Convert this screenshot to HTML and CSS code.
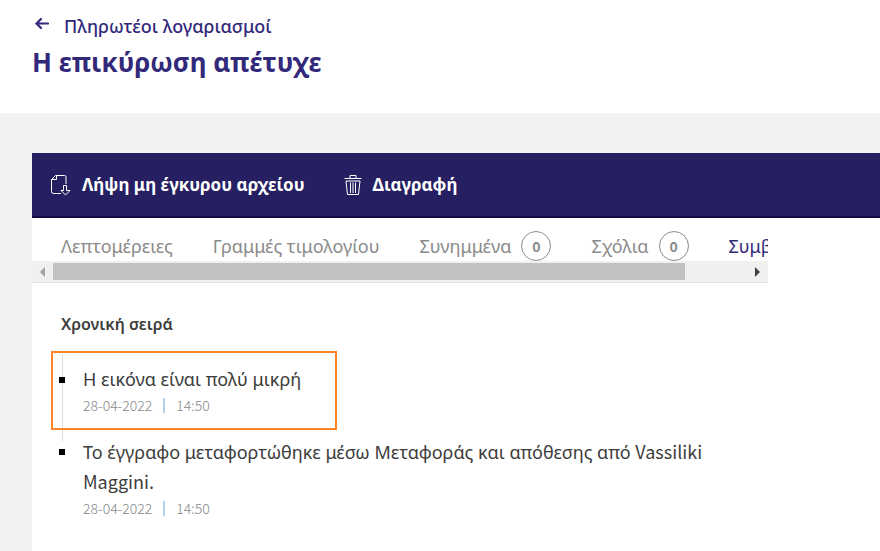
FILE: index.html
```html
<!DOCTYPE html>
<html lang="el">
<head>
    <meta charset="UTF-8">
    <title>Η επικύρωση απέτυχε</title>
    <link rel="stylesheet" href="styles.css">
</head>
<body>
<header class="page-header">
    <a class="back" href="#">
        <svg width="14" height="12" viewBox="0 0 14 12"><path d="M13 5.500H2M6 1L1.500 5.500 6 10" fill="none" stroke="currentColor" stroke-width="2.200" stroke-linecap="round"/></svg>
        <span>Πληρωτέοι λογαριασμοί</span>
    </a>
    <h1>Η επικύρωση απέτυχε</h1>
</header>
<main class="card">
    <div class="toolbar">
        <button type="button">
            <svg width="20" height="22" viewBox="0 0 20 22"><path d="M10 19.500H2.500a2 2 0 0 1-2-2V5.500L4.500 1.500h9a1.500 1.500 0 0 1 1.500 1.500V10M5.500 1.500v4H1M12.500 11.500h3v5H19L14.500 21 10 16.500h2.500z" fill="none" stroke="currentColor"/></svg>
            <span>Λήψη μη έγκυρου αρχείου</span>
        </button>
        <button type="button">
            <svg width="18" height="22" viewBox="0 0 18 22"><path d="M.5 4.500h17M6 4V1.500h6V4M2 7l1.500 13.500h11L16 7M2 7h14M6.500 8.500V19M9 8.500V19M11.500 8.500V19" fill="none" stroke="currentColor"/></svg>
            <span>Διαγραφή</span>
        </button>
    </div>
    <div class="tabs-wrap">
        <nav class="tabs">
            <a href="#">Λεπτομέρειες</a>
            <a href="#">Γραμμές τιμολογίου</a>
            <a href="#">Συνημμένα <span class="count">0</span></a>
            <a href="#">Σχόλια <span class="count">0</span></a>
            <a href="#" class="active">Συμβάντα</a>
        </nav>
        <div class="scrollbar">
            <span class="arrow left"></span>
            <div class="track"><div class="thumb"></div></div>
            <span class="arrow right"></span>
        </div>
    </div>
    <section class="timeline">
        <h2>Χρονική σειρά</h2>
        <ul>
            <li class="marked">
                <p>Η εικόνα είναι πολύ μικρή</p>
                <div class="meta"><span>28-04-2022</span><span>14:50</span></div>
            </li>
            <li>
                <p>Το έγγραφο μεταφορτώθηκε μέσω Μεταφοράς και απόθεσης από <span class="latin">Vassiliki Maggini.</span></p>
                <div class="meta"><span>28-04-2022</span><span>14:50</span></div>
            </li>
        </ul>
    </section>
</main>
</body>
</html>
```
FILE: styles.css
```css
*{
    margin: 0;
    padding: 0;
    box-sizing: border-box;
}
body{
    background: #f2f2f2;
    color: #3c3c3b;
    font-family: "Noto Sans", "Open Sans", sans-serif;
    font-size: 18px;
}
a{
    color: inherit;
    text-decoration: none;
}
.page-header{
    height: 113px;
    padding: 12px 32px 0;
    background: #fff;
    color: #32297a;
}
.back{
    display: flex;
    gap: 15px;
    font-weight: 500;
    line-height: 28px;
}
.back svg{
    margin: 6px 0 0 3px;
}
h1{
    font-size: 26px;
    line-height: 44px;
}
.card{
    isolation: isolate;
    margin: 40px 0 0 32px;
    padding-bottom: 32px;
    background: #fff;
}
.toolbar{
    display: flex;
    gap: 39px;
    height: 65px;
    padding-left: 19px;
    background: #262063;
    border-bottom: 2px solid #120b47;
}
.toolbar button{
    display: flex;
    align-items: center;
    gap: 11px;
    border: 0;
    background: none;
    color: #fff;
    font: bold 17px "Noto Sans", sans-serif;
}
.tabs-wrap{
    margin-right: 112px;
    padding-top: 13px;
    border-bottom: 1px solid #e0e0e0;
}
.tabs{
    display: flex;
    gap: 40px;
    height: 30px;
    padding-left: 29px;
    overflow: hidden;
    color: #8a8a8a;
    line-height: 30px;
    white-space: nowrap;
}
.tabs a{
    display: flex;
    gap: 10px;
}
.tabs .active{
    color: #32297a;
}
.count{
    width: 30px;
    height: 30px;
    border: 1px solid #8a8a8a;
    border-radius: 50%;
    font: bold 14px/28px "Noto Sans CJK JP", sans-serif;
    text-align: center;
}
.scrollbar{
    display: flex;
    align-items: center;
    height: 21px;
    background: #f0f0f0;
}
.arrow{
    width: 21px;
}
.arrow::before{
    content: "";
    display: block;
    width: 0;
    margin-left: 8px;
    border: solid transparent;
    border-width: 5px 0;
}
.left::before{
    border-right: 5px solid #a0a0a0;
}
.right::before{
    border-left: 5px solid #404040;
}
.track{
    flex: 1;
}
.thumb{
    width: 91%;
    height: 17px;
    background: #c1c1c1;
}
.timeline{
    padding: 27px 40px 0 19px;
}
h2{
    padding-left: 10px;
    font-size: 16px;
    font-weight: 600;
    line-height: 28px;
}
ul{
    margin-top: 13px;
    list-style: none;
}
li{
    position: relative;
    max-width: 680px;
    padding-left: 32px;
}
li::before{
    content: "";
    position: absolute;
    left: 8px;
    top: 12px;
    width: 6px;
    height: 6px;
    background: #000;
}
.marked{
    width: 286px;
    height: 79px;
    margin-bottom: 7px;
    padding: 11px 0 0 30px;
    border: 2px solid #ff8228;
}
.marked::before{
    left: 6px;
    top: 24px;
}
.marked::after{
    content: "";
    position: absolute;
    z-index: -1;
    left: 9px;
    top: 2px;
    width: 1px;
    height: 86px;
    background: #dcdcdc;
}
li p{
    line-height: 30px;
}
.latin{
    font-family: "Noto Sans CJK JP", sans-serif;
    line-height: 20px;
}
.meta{
    display: flex;
    color: #888;
    font-family: "Noto Sans CJK JP", sans-serif;
    font-size: 14px;
    font-weight: 300;
    line-height: 22px;
}
.meta span + span{
    display: flex;
    align-items: center;
}
.meta span + span::before{
    content: "";
    width: 2px;
    height: 15px;
    margin: 0 11px;
    background: #b5cfea;
}
```
